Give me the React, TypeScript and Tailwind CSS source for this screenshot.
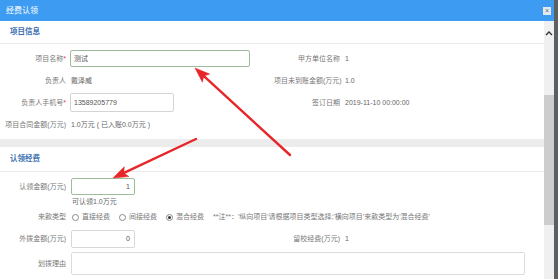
import React from "react";

const font = { fontFamily: "'Liberation Sans','Noto Sans CJK SC',sans-serif" };

const Label = ({ text, required }: { text: string; required?: boolean }) => (
  <div className="w-[66px] shrink-0 text-right text-[#777] whitespace-nowrap">
    {text}
    {required && <span className="text-[#e4393c]">*</span>}
  </div>
);

const SectionHeader = ({ title, h }: { title: string; h: string }) => (
  <div className={`${h} flex items-center pl-[10px] border-b border-[#ebebeb] text-[7.5px] font-bold text-[#3a6fb0]`}>
    {title}
  </div>
);

const Radio = ({ label, checked }: { label: string; checked?: boolean }) => (
  <div className="flex items-center mr-[9px]">
    <span className="w-[7px] h-[7px] rounded-full border border-[#8a8a8a] bg-white flex items-center justify-center">
      {checked && <span className="w-[3px] h-[3px] rounded-full bg-[#333]" />}
    </span>
    <span className="ml-[3px] text-[#777]">{label}</span>
  </div>
);

type Pt = [number, number];

// arrow head polygon computed from the tail and tip
const Arrow = ({ from, to }: { from: Pt; to: Pt }) => {
  const dx = to[0] - from[0];
  const dy = to[1] - from[1];
  const len = Math.hypot(dx, dy);
  const ux = dx / len;
  const uy = dy / len;
  const headLen = 15;
  const headW = 5.5;
  const bx = to[0] - ux * headLen;
  const by = to[1] - uy * headLen;
  const pts = [
    `${to[0]},${to[1]}`,
    `${bx - uy * headW},${by + ux * headW}`,
    `${bx + ux * 3},${by + uy * 3}`,
    `${bx + uy * headW},${by - ux * headW}`,
  ].join(" ");
  return (
    <g fill="#e8262a" stroke="#e8262a">
      <line x1={from[0]} y1={from[1]} x2={bx + ux * 4} y2={by + uy * 4} strokeWidth={2.4} strokeLinecap="round" />
      <polygon points={pts} strokeWidth={0.5} />
    </g>
  );
};

export default function App() {
  return (
    <div className="relative w-[558px] h-[279px] overflow-hidden bg-[#5d6063] text-[7px] leading-[10px]" style={font}>
      <div className="w-[554px] h-full flex flex-col bg-white">
        {/* title bar */}
        <div className="h-[21px] shrink-0 bg-[#3d9cf2] flex items-center justify-between pl-[6px] pr-[3px]">
          <span className="text-white text-[8px]">经费认领</span>
          <span className="w-[8px] h-[8px] bg-[#e4e9ee] text-[#667] text-[7px] leading-[8px] text-center">×</span>
        </div>

        <div className="flex flex-1 min-h-0">
          <div className="w-[544px] flex flex-col">
            {/* section 1 */}
            <SectionHeader title="项目信息" h="h-[23px]" />
            <div className="pt-[6px] pb-[6px] flex flex-col gap-[5px]">
              <div className="flex h-[17px]">
                <div className="w-[274px] flex items-center">
                  <Label text="项目名称" required />
                  <div className="ml-[4px] w-[180px] h-[17px] border border-[#9dbc99] rounded-[2px] flex items-center pl-[3px] text-[#555]">
                    测试
                  </div>
                </div>
                <div className="flex items-center">
                  <Label text="甲方单位名称" />
                  <span className="ml-[5px] text-[#666]">1</span>
                </div>
              </div>
              <div className="flex h-[17px]">
                <div className="w-[274px] flex items-center">
                  <Label text="负责人" />
                  <span className="ml-[5px] text-[#666]">戴泽威</span>
                </div>
                <div className="flex items-center">
                  <Label text="项目未到账金额(万元)" />
                  <span className="ml-[5px] text-[#666]">1.0</span>
                </div>
              </div>
              <div className="flex h-[17px]">
                <div className="w-[274px] flex items-center">
                  <Label text="负责人手机号" required />
                  <div className="ml-[4px] w-[104px] h-[19px] border border-[#d4d4d4] rounded-[2px] flex items-center pl-[3px] text-[#555]">
                    13589205779
                  </div>
                </div>
                <div className="flex items-center">
                  <Label text="签订日期" />
                  <span className="ml-[5px] text-[#666]">2019-11-10 00:00:00</span>
                </div>
              </div>
              <div className="flex h-[17px] items-center">
                <Label text="项目合同金额(万元)" />
                <span className="ml-[5px] text-[#666]">1.0万元 ( 已入账0.0万元 )</span>
              </div>
            </div>

            <div className="h-[8px] shrink-0 bg-[#ececec]" />

            {/* section 2 */}
            <SectionHeader title="认领经费" h="h-[25px]" />
            <div className="pt-[6px] flex flex-col">
              <div className="flex items-center h-[17px]">
                <Label text="认领金额(万元)" />
                <div className="ml-[5px] w-[64px] h-[17px] border border-[#9dbc99] rounded-[2px] flex items-center justify-end pr-[4px] text-[#555]">
                  1
                </div>
              </div>
              <div className="pl-[72px] mt-[2px] text-[#666]">可认领1.0万元</div>
              <div className="flex items-center h-[14px] mt-[3px]">
                <Label text="来款类型" />
                <div className="ml-[6px] flex items-center">
                  <Radio label="直接经费" />
                  <Radio label="间接经费" />
                  <Radio label="混合经费" checked />
                  <span className="text-[#777]">**注**：'纵向项目'请根据项目类型选择;'横向项目'来款类型为'混合经费'</span>
                </div>
              </div>
              <div className="flex h-[18px] mt-[6px]">
                <div className="w-[274px] flex items-center">
                  <Label text="外拨金额(万元)" />
                  <div className="ml-[5px] w-[64px] h-[18px] border border-[#d8d8d8] rounded-[2px] flex items-center justify-end pr-[4px] text-[#555]">
                    0
                  </div>
                </div>
                <div className="flex items-center">
                  <Label text="留校经费(万元)" />
                  <span className="ml-[5px] text-[#666]">1</span>
                </div>
              </div>
              <div className="flex items-center h-[23px] mt-[4px]">
                <Label text="划拨理由" />
                <div className="ml-[5px] w-[454px] h-[23px] border border-[#dcdcdc] rounded-[2px]" />
              </div>
            </div>
          </div>

          {/* scrollbar */}
          <div className="w-[10px] bg-[#f0f0f0] flex flex-col items-center">
            <svg width="8" height="6" viewBox="0 0 8 6" className="mt-[9px]">
              <path d="M1 5 L4 2 L7 5" fill="none" stroke="#333" strokeWidth="1.4" />
            </svg>
            <div className="mt-[59px] w-full h-[130px] bg-[#cdcdcd]" />
          </div>
        </div>
      </div>

      {/* annotation arrows */}
      <svg className="absolute inset-0 pointer-events-none" width="558" height="279">
        <Arrow from={[290, 155]} to={[195, 68]} />
        <Arrow from={[196, 139]} to={[113, 178]} />
      </svg>
    </div>
  );
}
